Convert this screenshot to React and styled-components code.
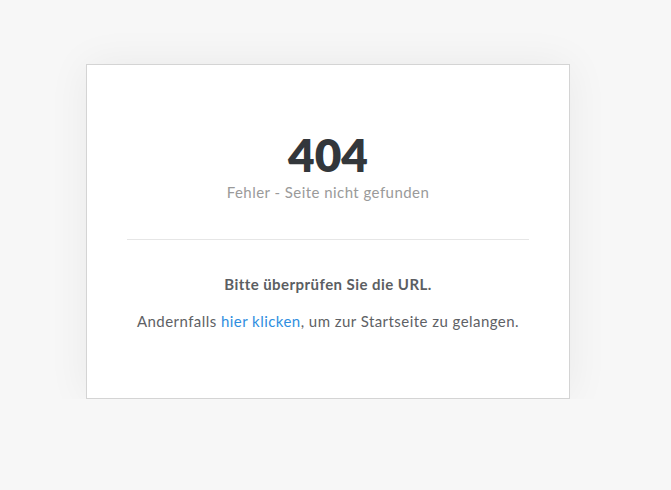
import React from 'react'
import styled, { createGlobalStyle } from 'styled-components'

const GlobalStyle = createGlobalStyle`
    body {
        margin: 0;
        background-color: #f7f7f7;
        font-family: "Lato", "Open Sans", sans-serif;
    }
`

const Page = styled.div`
    padding: 64px 0 0 86px;
`

const Card = styled.div`
    box-sizing: border-box;
    width: 484px;
    height: 335px;
    background-color: white;
    border: 1px solid #d4d4d4;
    box-shadow: 0 0 40px rgba(0, 0, 0, 0.06);
    padding: 65px 40px 0;
    text-align: center;
`

const Code = styled.h1`
    margin: 0;
    font-size: 46px;
    line-height: 50px;
    font-weight: 800;
    color: #33373b;
`

const Subtitle = styled.p`
    margin: 2px 0 0;
    font-size: 15px;
    line-height: 20px;
    letter-spacing: 0.45px;
    color: #9a9a9a;
`

const Divider = styled.hr`
    margin: 37px 0 0;
    border: 0;
    border-top: 1px solid #e6e6e6;
`

const Hint = styled.p`
    margin: ${(p) => p.$top}px 0 0;
    font-size: 15px;
    line-height: 20px;
    letter-spacing: 0.45px;
    font-weight: ${(p) => (p.$bold ? 700 : 400)};
    color: ${(p) => (p.$bold ? '#5b5e62' : '#5e6165')};
`

const Link = styled.a`
    color: #2f8ee0;
    text-decoration: none;
`

const App = () => (
    <Page>
        <GlobalStyle />
        <Card>
            <Code>404</Code>
            <Subtitle>Fehler - Seite nicht gefunden</Subtitle>
            <Divider />
            <Hint $bold $top={34}>Bitte überprüfen Sie die URL.</Hint>
            <Hint $top={17}>
                Andernfalls <Link href="#">hier klicken</Link>, um zur Startseite zu gelangen.
            </Hint>
        </Card>
    </Page>
)

export default App
